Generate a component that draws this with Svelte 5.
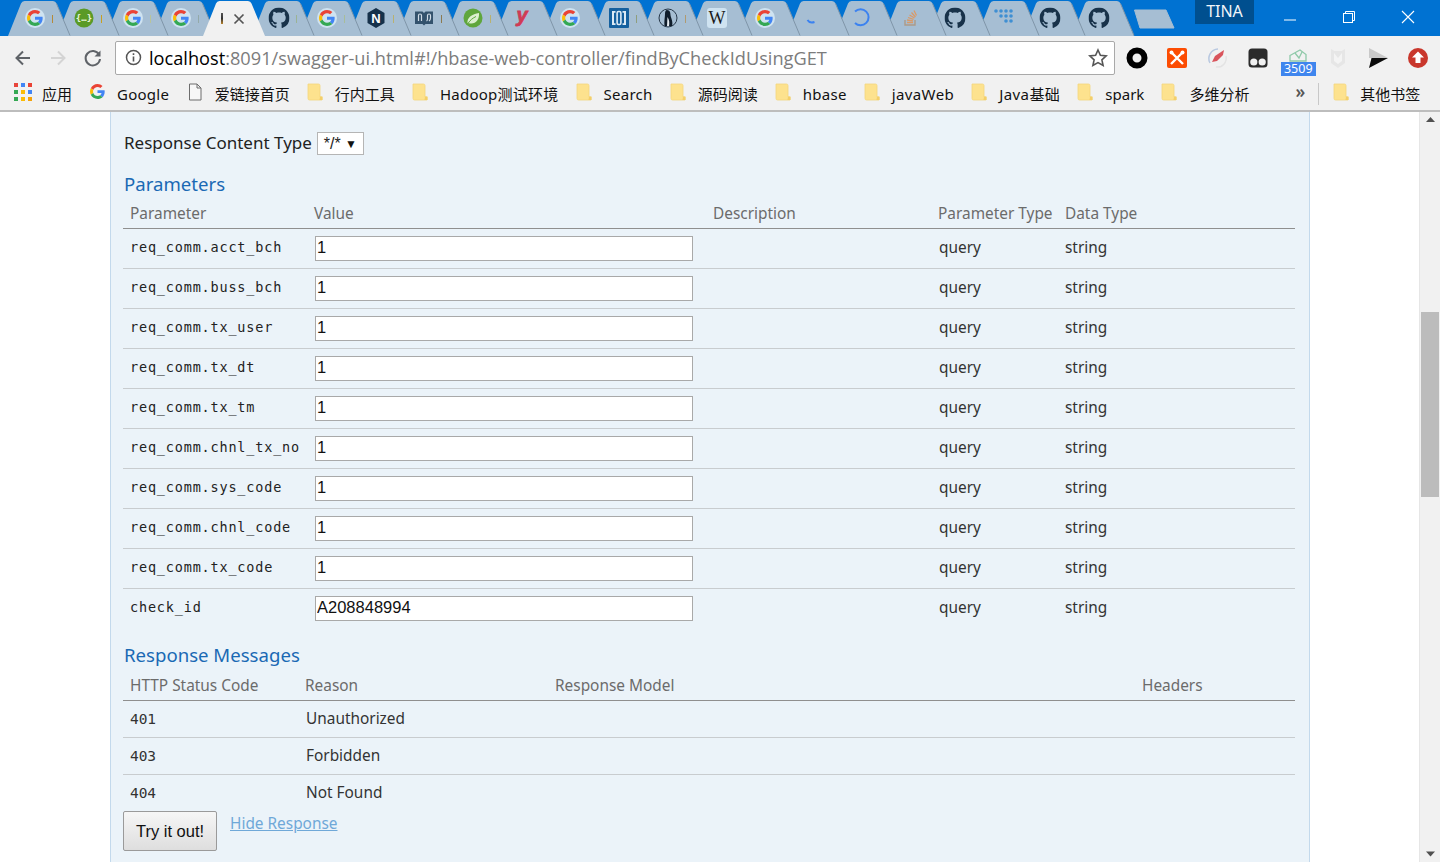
<script>
  const tabs = [
    { left: 8, icon: 'g', fade: '#b58a3a' }, { left: 57, icon: 'swagger', fade: '#c9a020' }, { left: 106, icon: 'g', fade: '#b9c49a' }, { left: 154, icon: 'g', fade: '#93a9a9' },
    { left: 203, icon: 'active' }, { left: 252, icon: 'gh', fade: '#9bb394' }, { left: 300, icon: 'g', fade: '#a8bd9a' }, { left: 349, icon: 'nginx', fade: '#b9b170' },
    { left: 397, icon: 'book', fade: '#8c7a50' }, { left: 446, icon: 'spring', fade: '#b9b170' }, { left: 495, icon: 'y' }, { left: 543, icon: 'g' },
    { left: 592, icon: 'bracket', fade: '#8f9e7d' }, { left: 641, icon: 'linux', fade: '#b09a70' }, { left: 690, icon: 'wiki' }, { left: 738, icon: 'g' },
    { left: 787, icon: 'spin1' }, { left: 835, icon: 'spin2' }, { left: 884, icon: 'so' }, { left: 928, icon: 'gh' }, { left: 977, icon: 'dots' },
    { left: 1023, icon: 'gh' }, { left: 1072, icon: 'gh' }
  ];
  const cells = tabs.map((t, i) => ({ ...t, width: (i < tabs.length - 1 ? tabs[i + 1].left : t.left + 61) - t.left, z: t.icon === 'active' ? 100 : 60 - i }));

  const bookmarks = [
    { icon: 'page', label: '爱链接首页' }, { icon: 'folder', label: '行内工具' }, { icon: 'folder', label: 'Hadoop测试环境', wide: true }, { icon: 'folder', label: 'Search', wide: true },
    { icon: 'folder', label: '源码阅读' }, { icon: 'folder', label: 'hbase', wide: true }, { icon: 'folder', label: 'javaWeb', extra: true }, { icon: 'folder', label: 'Java基础', extra: true },
    { icon: 'folder', label: 'spark' }, { icon: 'folder', label: '多维分析' }
  ];

  const params = [
    ['req_comm.acct_bch', '1'], ['req_comm.buss_bch', '1'], ['req_comm.tx_user', '1'], ['req_comm.tx_dt', '1'], ['req_comm.tx_tm', '1'],
    ['req_comm.chnl_tx_no', '1'], ['req_comm.sys_code', '1'], ['req_comm.chnl_code', '1'], ['req_comm.tx_code', '1'], ['check_id', 'A208848994']
  ];
  const messages = [['401', 'Unauthorized'], ['403', 'Forbidden'], ['404', 'Not Found']];
  const ghPath = 'M8 0C3.58 0 0 3.58 0 8c0 3.54 2.29 6.53 5.47 7.59.4.07.55-.17.55-.38 0-.19-.01-.82-.01-1.49-2.01.37-2.53-.49-2.69-.94-.09-.23-.48-.94-.82-1.13-.28-.15-.68-.52-.01-.53.63-.01 1.08.58 1.23.82.72 1.21 1.87.87 2.33.66.07-.52.28-.87.51-1.07-1.78-.2-3.64-.89-3.64-3.95 0-.87.31-1.59.82-2.15-.08-.2-.36-1.02.08-2.12 0 0 .67-.21 2.2.82.64-.18 1.32-.27 2-.27.68 0 1.36.09 2 .27 1.53-1.04 2.2-.82 2.2-.82.44 1.1.16 1.92.08 2.12.51.56.82 1.27.82 2.15 0 3.07-1.87 3.75-3.65 3.95.29.25.54.73.54 1.48 0 1.07-.01 1.93-.01 2.2 0 .21.15.46.55.38A8.013 8.013 0 0016 8c0-4.42-3.58-8-8-8z';
</script>

{#snippet googleG(size)}
  <svg width={size} height={size} viewBox="0 0 48 48">
    <path fill="#EA4335" d="M24 9.5c3.54 0 6.71 1.22 9.21 3.6l6.85-6.85C35.9 2.38 30.47 0 24 0 14.62 0 6.51 5.38 2.56 13.22l7.98 6.19C12.43 13.72 17.74 9.5 24 9.5z"/>
    <path fill="#4285F4" d="M46.98 24.55c0-1.57-.15-3.09-.38-4.55H24v9.02h12.94c-.58 2.96-2.26 5.48-4.78 7.18l7.73 6c4.51-4.18 7.09-10.36 7.09-17.65z"/>
    <path fill="#FBBC05" d="M10.53 28.59c-.48-1.45-.76-2.99-.76-4.59s.27-3.14.76-4.59l-7.98-6.19C.92 16.46 0 20.12 0 24c0 3.88.92 7.54 2.56 10.78l7.97-6.19z"/>
    <path fill="#34A853" d="M24 48c6.48 0 11.93-2.13 16.08-5.81l-7.73-6c-2.15 1.45-4.92 2.3-8.35 2.3-6.26 0-11.57-4.22-13.47-9.91l-7.98 6.19C6.51 42.62 14.62 48 24 48z"/>
  </svg>
{/snippet}

{#snippet favicon(kind)}
  {#if kind === 'g'}
    <span class="halo">{@render googleG(16)}</span>
  {:else if kind === 'gh'}
    <svg width="21" height="21" viewBox="0 0 16 16"><path fill="#18324a" d={ghPath}/></svg>
  {:else if kind === 'swagger'}
    <svg width="20" height="20" viewBox="0 0 20 20"><circle cx="10" cy="10" r="9.5" fill="#5a9a26"/><text x="10" y="13" text-anchor="middle" class="svgmono" fill="#e9f5da">{'{…}'}</text></svg>
  {:else if kind === 'nginx'}
    <svg width="18" height="20" viewBox="0 0 18 20"><path fill="#16314a" d="M9 0l8.5 5v10L9 20 .5 15V5z"/><text x="9" y="14.5" text-anchor="middle" class="svgbold" fill="#fff">N</text></svg>
  {:else if kind === 'book'}
    <svg width="20" height="18" viewBox="0 0 20 18"><path d="M1 2.500h7.500L10 4l1.500-1.500H19V15h-7.500L10 16.500 8.500 15H1z" fill="#33526d"/><path d="M4.500 12V6.500Q4.500 5 6 5t1.500 1.500V12M12.500 12q1-.5 1-2V6.500Q13.500 5 15 5t1.500 1.500V9q0 2-1.500 3" fill="none" stroke="#cfdbe6" stroke-width="1.200"/></svg>
  {:else if kind === 'spring'}
    <svg width="20" height="20" viewBox="0 0 20 20"><circle cx="10" cy="10" r="9.500" fill="#5fa63c"/><path d="M4.500 15C4 9.500 9 6 16 5c.5 6.500-3 11-8.500 10.500-1.200-.1-2.200-.2-3 -.5z" fill="#dcefd0"/><path d="M5 15.500c2-3.500 5-5.500 8-7" fill="none" stroke="#5fa63c" stroke-width="1"/></svg>
  {:else if kind === 'y'}
    <svg width="22" height="30" viewBox="0 0 22 30"><text x="11" y="19" text-anchor="middle" class="svgy" fill="#d03a55" stroke="#d03a55" stroke-width=".8">y</text></svg>
  {:else if kind === 'bracket'}
    <svg width="20" height="20" viewBox="0 0 20 20"><rect width="20" height="20" rx="1" fill="#14609f"/><path d="M3 3h3.500v1.800H5V15.200h1.500V17H3zM17 3h-3.500v1.800H15V15.200h-1.500V17H17z" fill="#dceaf5"/><rect x="8.100" y="3.500" width="3.800" height="13" rx="1.500" fill="none" stroke="#dceaf5" stroke-width="1.600"/></svg>
  {:else if kind === 'linux'}
    <svg width="20" height="20" viewBox="0 0 20 20"><circle cx="10" cy="10" r="9" fill="#a6bed3" stroke="#27384a"/><path d="M9 2c3 0 3.500 3 3.500 5s3 7 1.500 11H6.500C6 13 7 9 7 6c0-2 .500-4 2-4z" fill="#101d2b"/><path d="M9.500 9c2 3 2 6 1.500 9H9z" fill="#e8eef3"/></svg>
  {:else if kind === 'wiki'}
    <svg width="20" height="20" viewBox="0 0 20 20"><rect width="20" height="20" rx="3" fill="#cfe3f1"/><text x="10" y="15.500" text-anchor="middle" class="svgserif" fill="#1b1b1b">W</text></svg>
  {:else if kind === 'spin1'}
    <svg width="20" height="20" viewBox="0 0 20 20"><path d="M3.500 12c1.500 2.500 4 3 7 2" fill="none" stroke="#3b82f0" stroke-width="2"/></svg>
  {:else if kind === 'spin2'}
    <svg width="20" height="20" viewBox="0 0 20 20"><path d="M3 3.500A8 8 0 1 1 3 15" fill="none" stroke="#3b82f0" stroke-width="2"/></svg>
  {:else if kind === 'so'}
    <svg width="16" height="18" viewBox="0 0 16 18"><path d="M2 11v5h10v-5" fill="none" stroke="#ad9a88" stroke-width="1.400"/><path d="M4 13.500h6M4 11l6 .8M5 8.500l5.500 1.800M6.500 6l5 3M8.500 3.500l4 4.500M11 1.500l2.500 5" fill="none" stroke="#d99a68" stroke-width="1.300"/></svg>
  {:else if kind === 'dots'}
    <svg width="20" height="20" viewBox="0 0 20 20"><g fill="#3f8fd2"><circle cx="2" cy="3" r="1.800"/><circle cx="7" cy="3" r="1.800"/><circle cx="12" cy="3" r="1.800"/><circle cx="17" cy="3" r="1.800"/><circle cx="7" cy="8" r="1.800"/><circle cx="12" cy="8" r="1.800"/><circle cx="17" cy="8" r="1.800"/><circle cx="12" cy="13" r="1.800"/><circle cx="17" cy="13" r="1.800"/></g></svg>
  {/if}
{/snippet}

{#snippet folder()}
  <svg class="bmicon" width="16" height="18" viewBox="0 0 16 18"><path d="M1 1h10.500Q13 1 13 2.500V14h2v3H2.500Q1 17 1 15.500z" fill="#fde28e" stroke="#f4d77f" stroke-width=".8"/><path d="M13 13.500h2.500V17H12.500z" fill="#f4cf6a"/></svg>
{/snippet}

<div class="window">
  <header class="tabstrip">
    {#each cells as t}
      <div class="tabcell" class:active={t.icon === 'active'} style="width:{t.width}px;z-index:{t.z}">
        <svg class="tabshape" width="66" height="36" viewBox="0 0 66 36">
          <path d="M0 36 L13 3.500 Q14 1 16.500 1 H45 Q47.500 1 48.500 3.500 L62 36 Z" class="tabfill"/>
          <path d="M48.500 3.500 L62 35.500" class="tabedge"/>
        </svg>
        {#if t.icon === 'active'}
          <span class="activemark"></span>
          <svg class="tabclose" width="12" height="12" viewBox="0 0 12 12"><path d="M1.500 1.500l9 9M10.500 1.500l-9 9" stroke="#555" stroke-width="1.700"/></svg>
        {:else}
          <span class="fav">{@render favicon(t.icon)}</span>
          {#if t.fade}<span class="fade" style="background:{t.fade}"></span>{/if}
        {/if}
      </div>
    {/each}
    <svg class="newtab" width="42" height="20" viewBox="0 0 42 20"><path d="M1.500 1H33L41 19H7z" fill="#a6bed3" stroke="#a6bed3" stroke-linejoin="round"/></svg>
    <div class="spacer"></div>
    <div class="profile">TINA</div>
    <div class="winctl">
      <svg width="14" height="14" viewBox="0 0 14 14"><path d="M1 10h12" stroke="#fff"/></svg>
      <svg width="14" height="14" viewBox="0 0 14 14"><rect x="1.500" y="3.500" width="9" height="9" fill="none" stroke="#fff"/><path d="M3.500 3.500v-2h9v9h-2" fill="none" stroke="#fff"/></svg>
      <svg width="14" height="14" viewBox="0 0 14 14"><path d="M1 1l12 12M13 1L1 13" stroke="#fff" stroke-width="1.100"/></svg>
    </div>
  </header>

  <div class="toolbar">
    <svg class="nav" width="20" height="20" viewBox="0 0 20 20"><path d="M17 10H3.500M10 3.500L3.500 10l6.500 6.500" fill="none" stroke="#5f6368" stroke-width="2"/></svg>
    <svg class="nav" width="20" height="20" viewBox="0 0 20 20"><path d="M3 10h13.500M10 3.500l6.500 6.500-6.500 6.500" fill="none" stroke="#d4d4d4" stroke-width="2"/></svg>
    <svg class="nav" width="20" height="20" viewBox="0 0 20 20"><path d="M16 6.500A7.200 7.200 0 1 0 17 11" fill="none" stroke="#5f6368" stroke-width="2"/><path d="M17.500 2.500v6h-6z" fill="#5f6368"/></svg>
    <div class="omnibox">
      <svg width="17" height="17" viewBox="0 0 17 17"><circle cx="8.500" cy="8.500" r="7" fill="none" stroke="#555" stroke-width="1.500"/><path d="M8.500 7.500v5M8.500 4.300v1.800" stroke="#555" stroke-width="1.600"/></svg>
      <div class="url"><span class="host">localhost</span>:8091/swagger-ui.html#!/hbase-web-controller/findByCheckIdUsingGET</div>
      <svg width="20" height="20" viewBox="0 0 20 20"><path d="M10 2l2.400 5.300 5.800.600-4.300 3.900 1.200 5.700L10 14.600 4.900 17.500l1.200-5.700L1.800 7.900l5.800-.6z" fill="none" stroke="#555" stroke-width="1.600"/></svg>
    </div>
    <div class="exts">
      <svg width="22" height="22" viewBox="0 0 22 22"><circle cx="11" cy="11" r="7.500" fill="none" stroke="#000" stroke-width="6"/></svg>
      <svg width="22" height="22" viewBox="0 0 22 22"><rect x="1" y="1" width="20" height="20" rx="2" fill="#fc4c02"/><path d="M5 5l12 12M17 5L5 17" stroke="#fff" stroke-width="2.400"/><circle cx="5.500" cy="5.500" r="2" fill="#fff"/><circle cx="16.500" cy="5.500" r="2" fill="#fff"/></svg>
      <svg width="22" height="22" viewBox="0 0 22 22"><path d="M4 16A9.500 9.500 0 0 1 12 2" fill="none" stroke="#b8c8e0" stroke-width="1.500"/><path d="M18 3L9 9l-3 6 5-1 6-6z" fill="#d9545c"/><path d="M20 9a9 9 0 0 1-10 11" fill="none" stroke="#e3e3e3" stroke-width="1.500"/></svg>
      <svg width="22" height="22" viewBox="0 0 22 22"><rect x="1.500" y="1.500" width="19" height="19" rx="3.500" fill="#2b2b2b"/><circle cx="6.800" cy="15" r="3.600" fill="#f1f1f1"/><circle cx="15.200" cy="15" r="3.600" fill="#f1f1f1"/></svg>
      <div class="badgeicon">
        <svg width="22" height="22" viewBox="0 0 22 22"><path d="M3 8.500L13 3l6 4.500V14H3z" fill="none" stroke="#8fc9a9" stroke-width="1.300"/><path d="M8 6l4 5 3-6" fill="none" stroke="#8fc9a9" stroke-width="1.300"/></svg>
        <span class="badge">3509</span>
      </div>
      <svg width="22" height="22" viewBox="0 0 22 22"><path d="M4 2l3.500 2h7L18 2v14l-7 5-7-5z" fill="#e6e6e6"/><path d="M7 6l4 5 4-5v8l-4 3-4-3z" fill="#f4f4f4"/></svg>
      <svg width="22" height="22" viewBox="0 0 22 22"><path d="M2 1l19 10H2z" fill="#c9c9c9"/><path d="M2 11h19L2 21l2.500-10z" fill="#0b0b0b"/></svg>
      <svg width="22" height="22" viewBox="0 0 22 22"><circle cx="11" cy="11" r="10" fill="#c9372c"/><path d="M11 4.500l6 6h-3.500V16h-5v-5.500H5z" fill="#fff"/></svg>
    </div>
  </div>

  <nav class="bookmarks">
    <div class="bm apps">
      <span class="grid9">
        {#each ['#e8453c','#4285f4','#ea4335','#34a853','#fbbc05','#4285f4','#34a853','#fbbc05','#f4a20a'] as c}<i style="background:{c}"></i>{/each}
      </span>
      <span>应用</span>
    </div>
    <div class="bm gbm">
      <span class="bmg">{@render googleG(15)}</span>
      <span class="wide">Google</span>
    </div>
    {#each bookmarks as b}
      <div class="bm">
        {#if b.icon === 'folder'}
          {@render folder()}
        {:else}
          <svg class="bmicon" width="16" height="18" viewBox="0 0 16 18"><path d="M2.500 1H10l4 4v12H2.500zM10 1v4h4" fill="#f7f7f7" stroke="#6d6d6d"/></svg>
        {/if}
        <span class:wide={b.wide} class:extra={b.extra}>{b.label}</span>
      </div>
    {/each}
    <div class="more">»</div>
    <div class="sep"></div>
    <div class="bm last">
      {@render folder()}
      <span>其他书签</span>
    </div>
  </nav>

  <div class="page">
    <main class="content">
      <section class="panel">
        <div class="ctype">
          <span class="ctlabel">Response Content Type</span>
          <span class="select">*/*<b>▼</b></span>
        </div>

        <h4>Parameters</h4>
        <table class="ptable">
          <colgroup><col style="width:184px"/><col style="width:399px"/><col style="width:225px"/><col style="width:127px"/><col/></colgroup>
          <thead>
            <tr><th>Parameter</th><th>Value</th><th>Description</th><th>Parameter Type</th><th>Data Type</th></tr>
          </thead>
          <tbody>
            {#each params as [name, val]}
              <tr>
                <td class="mono">{name}</td>
                <td><input value={val} /></td>
                <td></td>
                <td class="shift">query</td>
                <td>string</td>
              </tr>
            {/each}
          </tbody>
        </table>

        <h4 class="second">Response Messages</h4>
        <table class="rtable">
          <colgroup><col style="width:175px"/><col style="width:250px"/><col style="width:587px"/><col/></colgroup>
          <thead>
            <tr><th>HTTP Status Code</th><th>Reason</th><th>Response Model</th><th>Headers</th></tr>
          </thead>
          <tbody>
            {#each messages as [code, reason]}
              <tr><td class="mono code">{code}</td><td class="reason">{reason}</td><td></td><td></td></tr>
            {/each}
          </tbody>
        </table>

        <div class="actions">
          <button>Try it out!</button>
          <a href="#hide">Hide Response</a>
        </div>
      </section>
    </main>
    <aside class="scrollbar">
      <svg width="20" height="17" viewBox="0 0 20 17"><path d="M10.500 5l4.500 5H6z" fill="#505050"/></svg>
      <div class="track"><div class="thumb"></div></div>
      <svg width="20" height="17" viewBox="0 0 20 17"><path d="M10.500 11.500l4.500-5H6z" fill="#505050"/></svg>
    </aside>
  </div>
</div>

<style>
  :global(body) { margin: 0; background: #fff; overflow: hidden; }
  .window { width: 1440px; height: 862px; display: flex; flex-direction: column; overflow: hidden; font-family: "Noto Sans", "Noto Sans CJK SC", sans-serif; }

  .tabstrip { height: 36px; flex: none; background: #0072d2; display: flex; padding-left: 8px; box-sizing: border-box; }
  .tabcell { position: relative; height: 36px; flex: none; }
  .tabshape { position: absolute; left: 0; top: 0; }
  .tabfill { fill: #a6bed3; }
  .tabedge { stroke: #7f95a8; stroke-width: 1; fill: none; }
  .active .tabfill { fill: #f1f1f1; }
  .active .tabedge { stroke: none; }
  .fav { position: absolute; left: 27px; top: 18px; transform: translate(-50%, -50%); display: flex; }
  .halo { width: 20px; height: 20px; border-radius: 50%; background: #cfe3f1; display: flex; align-items: center; justify-content: center; }
  .fade { position: absolute; left: 44px; top: 15px; width: 1px; height: 8px; }
  .activemark { position: absolute; left: 18px; top: 13px; width: 2px; height: 11px; background: linear-gradient(#555, #333 50%, #b9832c); }
  .tabclose { position: absolute; left: 30px; top: 13px; }
  .newtab { margin-top: 9px; flex: none; }
  .spacer { flex: 1; }
  .profile { width: 59px; height: 24px; flex: none; background: #004f8f; color: #f1f5f9; font-size: 16px; line-height: 23px; text-align: center; margin-right: 29px; box-sizing: border-box; }
  .winctl { display: flex; gap: 45px; padding: 10px 25px 0 0; flex: none; align-items: flex-start; }

  .toolbar { height: 39px; flex: none; background: #f1f1f1; display: flex; align-items: center; box-sizing: border-box; padding: 4px 0 0 13px; }
  .nav { margin-right: 15px; flex: none; }
  .toolbar .nav:nth-child(3) { margin-right: 12px; }
  .omnibox { width: 1000px; height: 34px; box-sizing: border-box; border: 1px solid #a9a9a9; border-radius: 2px; background: #fff; display: flex; align-items: center; padding: 0 6px 0 9px; gap: 7px; flex: none; }
  .url { flex: 1; font-family: "Open Sans", sans-serif; font-size: 18.200px; color: #7c7c7c; white-space: nowrap; overflow: hidden; }
  .host { color: #000; }
  .exts { display: flex; gap: 18.200px; padding-left: 11px; align-items: center; }
  .badgeicon { position: relative; width: 22px; height: 22px; }
  .badge { position: absolute; left: -6px; top: 15px; width: 35px; height: 14px; background: #3f86ee; color: #fff; font-size: 12.500px; line-height: 14px; text-align: center; font-family: "Noto Sans", sans-serif; }

  .bookmarks { height: 37px; flex: none; box-sizing: border-box; background: #f1f1f1; border-bottom: 2px solid #bdbdbd; display: flex; align-items: center; padding: 2px 0 0 14px; font-size: 15px; color: #111; white-space: nowrap; }
  .bm { display: flex; align-items: center; gap: 12px; margin-right: 17.100px; flex: none; }
  .bmicon { flex: none; margin-top: -3px; }
  .wide { letter-spacing: .25px; }
  .extra { letter-spacing: .4px; }
  .apps { gap: 10px; margin-right: 18px; }
  .bmg { width: 16px; display: flex; margin-top: -4px; }
  .gbm { gap: 11px; margin-right: 17.500px; }
  .grid9 { display: grid; grid-template-columns: repeat(3, 4px); gap: 3px; margin-top: -4px; }
  .grid9 i { width: 4px; height: 4px; display: block; }
  .more { margin-left: 29px; font-size: 17px; color: #555; font-weight: 600; margin-top: -4px; }
  .sep { width: 1px; height: 22px; background: #c8c8c8; margin: 0 14px 0 13px; flex: none; }
  .last { margin-right: 0; gap: 11px; }

  .page { flex: 1; min-height: 0; display: flex; background: #fff; }
  .content { flex: 1; min-width: 0; overflow: hidden; }
  .panel { width: 1200px; margin-left: 110px; box-sizing: border-box; height: 100%; background: #ebf3f9; border-left: 1px solid #c3d9ec; border-right: 1px solid #c3d9ec; padding: 20px 14px 0 12px; color: #333; }
  .ctype { display: flex; align-items: center; gap: 5px; height: 23px; color: #222; font-size: 17px; margin-left: 1px; }
  .ctlabel { margin-top: -2px; }
  .select { display: inline-flex; align-items: center; justify-content: space-between; width: 47px; height: 23px; box-sizing: border-box; border: 1px solid #b5b5b5; background: #fff; padding: 0 6px 0 6px; font-family: "Liberation Sans", sans-serif; font-size: 16px; color: #222; }
  .select b { font-size: 12px; font-weight: 400; color: #111; }
  h4 { margin: 17px 0 0 1px; font-size: 18.600px; font-weight: 400; color: #1a69b4; line-height: 24px; height: 24px; }
  h4.second { margin-top: 15px; height: 26px; }
  table { width: 100%; border-collapse: collapse; table-layout: fixed; }
  th { text-align: left; font-weight: 400; color: #6b6b6b; font-size: 15.400px; padding: 2px 0 0 7px; height: 31px; border-bottom: 1px solid #8f8f8f; white-space: nowrap; box-sizing: border-box; }
  .ptable th { height: 32px; padding-top: 4px; }
  .ptable td { height: 40px; border-bottom: 1px solid #c8cccf; padding: 0 0 2px 7px; color: #333; font-size: 15.400px; box-sizing: border-box; }
  .ptable tbody tr:last-child td { border-bottom: 0; }
  .ptable td.shift { padding-left: 8px; }
  td.mono { font-family: "DejaVu Sans Mono", monospace; font-size: 13.500px; letter-spacing: .82px; color: #222; }
  .ptable td:nth-child(2) { padding-bottom: 0; }
  input { display: block; box-sizing: border-box; width: 378px; height: 25px; margin-left: 1px; border: 1px solid #a9a9a9; background: #fff; padding: 0 1px 1px; font-family: "Liberation Sans", sans-serif; font-size: 16.500px; color: #111; outline: 0; border-radius: 0; }
  .rtable td { height: 37px; border-bottom: 1px solid #c8cccf; padding: 0 0 0 7px; box-sizing: border-box; font-size: 15.400px; color: #333; }
  .rtable tbody tr:last-child td { border-bottom: 0; }
  .rtable td.reason { padding-left: 8px; }
  td.code { letter-spacing: -.1px !important; font-size: 14.500px !important; }
  .actions { display: flex; align-items: flex-start; gap: 13px; }
  button { width: 94px; height: 40px; box-sizing: border-box; border: 1px solid #9a9a9a; border-radius: 2px; background: linear-gradient(#f6f6f6, #dedede); font-family: "Liberation Sans", sans-serif; font-size: 16.500px; color: #111; padding: 0; }
  a { color: #6fa8d8; font-size: 15.400px; text-decoration: underline; line-height: 25px; }

  .scrollbar { width: 21px; flex: none; box-sizing: border-box; background: #f1f1f1; border-left: 1px solid #e6e6e6; display: flex; flex-direction: column; }
  .track { flex: 1; min-height: 0; }
  .thumb { height: 185px; margin: 183px 1px 0; background: #bcbcbc; }
  .svgmono { font: 700 9px "DejaVu Sans Mono", monospace; }
  .svgbold { font: 700 13px "Liberation Sans", sans-serif; }
  .svgserif { font: 400 18px "Liberation Serif", serif; }
  .svgy { font: italic 700 20px "Liberation Sans", sans-serif; }
</style>
